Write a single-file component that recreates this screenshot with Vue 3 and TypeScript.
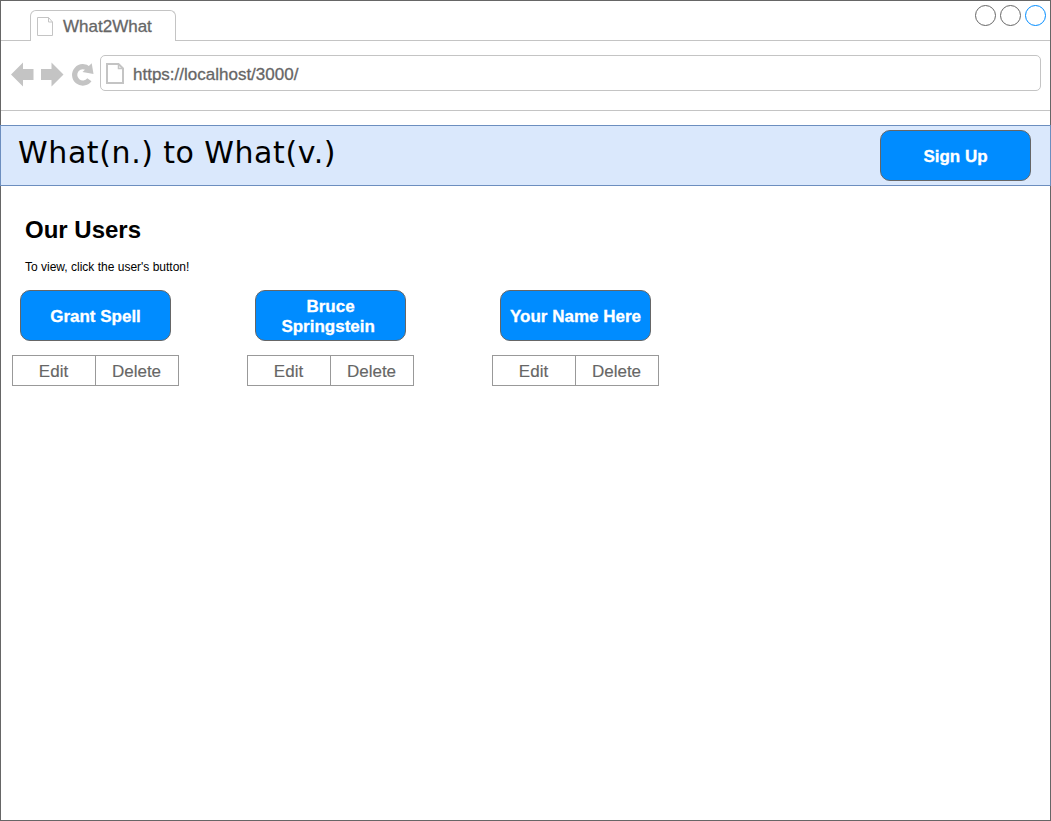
<script setup lang="ts">
interface User {
  id: number
  name: string
}

const pageTitle = 'What2What'
const address = 'https://localhost/3000/'
const users: User[] = [
  { id: 1, name: 'Grant Spell' },
  { id: 2, name: 'Bruce Springstein\u00a0' },
  { id: 3, name: 'Your Name Here' },
]
</script>

<template>
  <div class="window">
    <header class="tabs">
      <div class="tab">
        <svg class="tab-icon" width="16" height="19" viewBox="0 0 16 19">
          <path d="M.5.5H11.5L15.5 5V18.5H.5ZM11.5.5V5H15.5" />
        </svg>
        <span class="tab-title">{{ pageTitle }}</span>
      </div>
      <div class="controls">
        <span class="control"></span>
        <span class="control"></span>
        <span class="control active"></span>
      </div>
    </header>

    <div class="toolbar">
      <svg class="nav" width="83" height="26" viewBox="0 0 83 26">
        <path d="M0 13.5L12 1.5V8H22.5V19H12V25.5Z" />
        <path d="M52.5 13.5L40.5 1.5V8H30V19H40.5V25.5Z" />
        <path class="reload" d="M78.4 18.8A8.2 8.2 0 1 1 77.6 8" />
        <path d="M80.7 2.3L82.5 13L71.5 11Z" />
      </svg>
      <div class="address">
        <svg class="page-icon" width="18" height="21" viewBox="0 0 18 21">
          <path d="M1 1H12.5L17 5.5V20H1Z" />
          <path class="fold" d="M12.5 1V5.5H17" />
        </svg>
        <span class="url">{{ address }}</span>
      </div>
    </div>

    <div class="banner">
      <h1>What(n.) to What(v.)</h1>
      <button class="primary">Sign Up</button>
    </div>

    <main>
      <h2>Our Users</h2>
      <p>To view, click the user's button!</p>
      <div class="users">
        <section v-for="user in users" :key="user.id" class="user">
          <button class="primary"><span class="name">{{ user.name }}</span></button>
          <div class="actions">
            <button>Edit</button>
            <button>Delete</button>
          </div>
        </section>
      </div>
    </main>
  </div>
</template>

<style>
body {
  margin: 0;
  background: #fff;
}
</style>

<style scoped>
* {
  box-sizing: border-box;
}
.window {
  width: 1051px;
  height: 821px;
  border: 1px solid #666;
  background: #fff;
  font-family: "Liberation Sans", Arial, sans-serif;
  color: #000;
}
button {
  font: inherit;
  margin: 0;
  padding: 0;
}
.tabs {
  display: flex;
  justify-content: space-between;
  height: 40px;
  border-bottom: 1px solid #c4c4c4;
}
.tab {
  display: flex;
  width: 146px;
  height: 31px;
  margin: 9px 0 0 29px;
  padding: 6px 0 0 6px;
  border: 1px solid #c4c4c4;
  border-bottom: 0;
  border-radius: 6px 6px 0 0;
  background: #fff;
}
.tab-icon {
  flex: none;
  fill: none;
  stroke: #c4c4c4;
}
.tab-title {
  margin-left: 10px;
  font-size: 17px;
  line-height: 20px;
  color: #666;
  -webkit-text-stroke: 0.3px #666;
}
.controls {
  display: flex;
  gap: 4px;
  padding: 4px 4px 0 0;
}
.control {
  width: 21px;
  height: 21px;
  border: 1px solid #666;
  border-radius: 50%;
}
.control.active {
  border-color: #008cff;
}
.toolbar {
  display: flex;
  height: 70px;
  padding: 14px 9px 0 10px;
  border-bottom: 1px solid #c4c4c4;
}
.nav {
  flex: none;
  margin: 6px 6px 0 0;
  fill: #c4c4c4;
}
.nav .reload {
  fill: none;
  stroke: #c4c4c4;
  stroke-width: 5.2;
}
.address {
  display: flex;
  flex: 1;
  height: 36px;
  padding: 7px 0 0 5px;
  border: 1px solid #c4c4c4;
  border-radius: 5px;
}
.page-icon {
  flex: none;
  fill: none;
  stroke: #c4c4c4;
  stroke-width: 2;
}
.page-icon .fold {
  stroke-width: 1.5;
}
.url {
  margin-left: 9px;
  font-size: 17px;
  line-height: 24px;
  color: #666;
  -webkit-text-stroke: 0.3px #666;
}
.banner {
  display: flex;
  justify-content: space-between;
  height: 61px;
  margin: 14px -1px 0;
  padding: 4px 20px 0 17px;
  border: 1px solid #6c8ebf;
  background: #dae8fc;
}
h1 {
  margin: 4px 0 0;
  font-family: Verdana, "DejaVu Sans", sans-serif;
  font-size: 30px;
  font-weight: 400;
  line-height: 38px;
  letter-spacing: 0.6px;
  word-spacing: -0.5px;
  white-space: nowrap;
}
.primary {
  display: flex;
  align-items: center;
  justify-content: center;
  width: 151px;
  height: 51px;
  padding-top: 2px;
  border: 1px solid #666;
  border-radius: 10px;
  background: #008cff;
  color: #fff;
  font-size: 17px;
  font-weight: 700;
  line-height: 20px;
  -webkit-text-stroke: 0.3px #fff;
}
.banner .primary {
  margin-right: -1px;
}
main {
  padding: 29px 0 0 11px;
}
h2 {
  margin: 0 0 0 13px;
  font-size: 24px;
  line-height: 30px;
}
p {
  margin: 14px 0 0 13px;
  font-size: 12px;
  line-height: 16px;
}
.users {
  display: grid;
  grid-template-columns: 235px 245px 167px;
  margin-top: 15px;
}
.user {
  width: 167px;
}
.user .primary {
  margin-left: 8px;
}
.name {
  max-width: 135px;
}
.actions {
  display: flex;
  height: 31px;
  margin-top: 14px;
  border: 1px solid #999;
}
.actions button {
  flex: 1;
  padding: 2px 1px 0 0;
  border: 0;
  background: #fff;
  color: #666;
  font-size: 17px;
  -webkit-text-stroke: 0.15px #666;
}
.actions button + button {
  border-left: 1px solid #999;
}
</style>
